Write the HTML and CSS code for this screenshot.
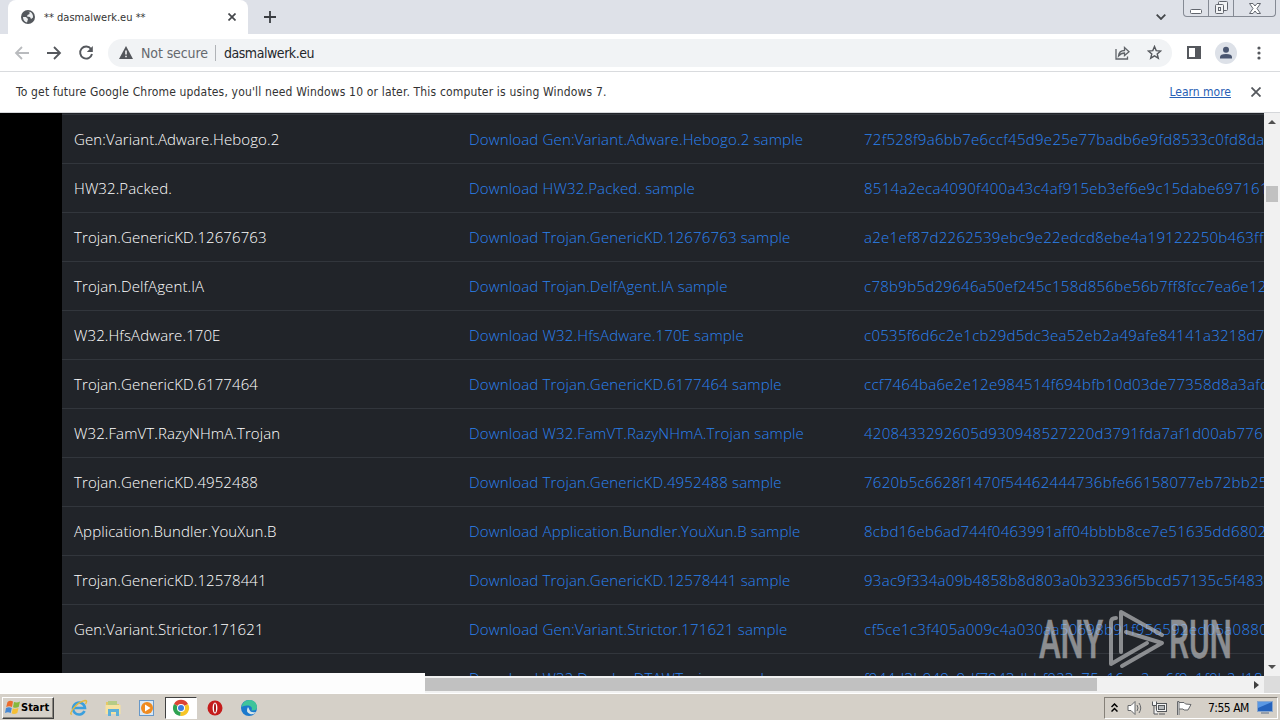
FILE: index.html
```html
<!DOCTYPE html>
<html lang="en">
<head>
    <meta charset="UTF-8">
    <meta name="viewport" content="width=device-width, initial-scale=1.0">
    <title>** dasmalwerk.eu **</title>
    <link rel="stylesheet" href="styles.css">
</head>
<body>
    <div class="tab-strip">
        <div class="tab">
            <svg class="globe" width="14" height="14" viewBox="0 0 14 14"><circle cx="7" cy="7" r="7" fill="#54585d"/><path d="M2 7 L5 7 L7 9 L6 12.4 Q2 11.500 2 7 M6 2 L8.500 1.700 L8.500 4 L6.500 5 L6 6.500 L9 7 L10 9 L12 7.500 Q12.300 4 9.500 2" fill="#eef0f2"/></svg>
            <span class="tab-title">** dasmalwerk.eu **</span>
            <svg width="8" height="8" viewBox="0 0 8 8" stroke="#44474b" stroke-width="1.700"><path d="M0.500 0.500 L7.500 7.500 M7.500 0.500 L0.500 7.500"/></svg>
        </div>
        <svg class="new-tab" width="12" height="12" viewBox="0 0 12 12" stroke="#3a3d42" stroke-width="1.800"><path d="M6 0 V12 M0 6 H12"/></svg>
        <svg class="tab-search" width="10" height="6" viewBox="0 0 10 6" fill="none" stroke="#44474b" stroke-width="1.800"><path d="M0.700 0.700 L5 5 L9.300 0.700"/></svg>
        <div class="window-buttons">
            <span><svg width="12" height="5" viewBox="0 0 12 5"><rect x="0.500" y="0.500" width="11" height="4" rx="1" fill="#fff" stroke="#62666e"/></svg></span>
            <span><svg width="13" height="13" viewBox="0 0 13 13" fill="#f2f3f5" stroke="#62666e"><rect x="3.500" y="0.500" width="9" height="9" rx="1"/><rect x="0.500" y="3.500" width="8" height="9" rx="1"/><rect x="3.500" y="6.500" width="2" height="3"/></svg></span>
            <span class="close-btn"><svg width="12" height="11" viewBox="0 0 12 11"><path d="M0.500 0.500 H4 L6 3 L8 0.500 H11.500 L8 5.500 L11.500 10.500 H8 L6 8 L4 10.500 H0.500 L4 5.500 Z" fill="#fff" stroke="#62666e"/></svg></span>
        </div>
    </div>

    <div class="toolbar">
        <svg class="nav-icon" width="16" height="14" viewBox="0 0 16 14" fill="none" stroke="#b9bbbe" stroke-width="1.800"><path d="M15 7 H2 M8 1 L2 7 L8 13"/></svg>
        <svg class="nav-icon" width="16" height="14" viewBox="0 0 16 14" fill="none" stroke="#55585d" stroke-width="1.800"><path d="M1 7 H14 M8 1 L14 7 L8 13"/></svg>
        <svg class="nav-icon" width="16" height="16" viewBox="0 0 16 16" fill="none" stroke="#55585d" stroke-width="1.900"><path d="M13 4 A6 6 0 1 0 14 9"/><path d="M14.800 1 V7 H8.800 Z" fill="#55585d" stroke="none"/></svg>
        <div class="omnibox">
            <svg width="14" height="13" viewBox="0 0 14 13"><path d="M7 0 L14 13 H0 Z" fill="#54575c"/><path d="M7 4.500 V8.500 M7 9.700 V11.200" stroke="#fff" stroke-width="1.500"/></svg>
            <span class="not-secure">Not secure</span>
            <span class="divider"></span>
            <span class="url">dasmalwerk.eu</span>
            <svg class="share" width="15" height="14" viewBox="0 0 15 14" fill="none" stroke="#606469" stroke-width="1.300"><path d="M1 3 V13 H12.500 V10.500"/><path d="M3.500 10 Q4 4.500 9.500 4.500 V1.500 L14 5.700 L9.500 9.500 V7 Q6 7 3.500 10 Z"/></svg>
            <svg class="star" width="15" height="15" viewBox="0 0 15 15" fill="none" stroke="#55585d" stroke-width="1.400"><path d="M7.500 1.500 L9.200 5.600 L13.600 6 L10.200 8.900 L11.300 13.200 L7.500 10.900 L3.700 13.200 L4.800 8.900 L1.400 6 L5.800 5.600 Z"/></svg>
        </div>
        <svg class="side-panel" width="14" height="13" viewBox="0 0 14 13"><rect x="1" y="1" width="12" height="11" fill="#fff" stroke="#55585d" stroke-width="2"/><rect x="8" y="1" width="5" height="11" fill="#55585d"/></svg>
        <svg class="avatar" width="22" height="22" viewBox="0 0 22 22"><circle cx="11" cy="11" r="11" fill="#dde1e8"/><circle cx="11" cy="7.800" r="3" fill="#4a5670"/><path d="M5 16.500 V15 Q5 12 11 12 Q17 12 17 15 V16.500 Z" fill="#4a5670"/></svg>
        <svg class="menu-dots" width="4" height="14" viewBox="0 0 4 14" fill="#55585d"><circle cx="2" cy="2" r="1.600"/><circle cx="2" cy="7" r="1.600"/><circle cx="2" cy="12" r="1.600"/></svg>
    </div>

    <div class="infobar">
        <span class="infobar-text">To get future Google Chrome updates, you'll need Windows 10 or later. This computer is using Windows 7.</span>
        <a class="learn-more" href="#">Learn more</a>
        <svg width="10" height="10" viewBox="0 0 10 10" stroke="#55585d" stroke-width="1.800"><path d="M0.500 0.500 L9.500 9.500 M9.500 0.500 L0.500 9.500"/></svg>
    </div>

    <div class="viewport">
        <div class="page">
            <div class="samples">
                <div class="row"><span>Gen:Variant.Adware.Hebogo.2</span><a>Download Gen:Variant.Adware.Hebogo.2 sample</a><a class="hash">72f528f9a6bb7e6ccf45d9e25e77badb6e9fd8533c0fd8da</a></div>
                <div class="row"><span>HW32.Packed.</span><a>Download HW32.Packed. sample</a><a class="hash">8514a2eca4090f400a43c4af915eb3ef6e9c15dabe697161</a></div>
                <div class="row"><span>Trojan.GenericKD.12676763</span><a>Download Trojan.GenericKD.12676763 sample</a><a class="hash">a2e1ef87d2262539ebc9e22edcd8ebe4a19122250b463fff</a></div>
                <div class="row"><span>Trojan.DelfAgent.IA</span><a>Download Trojan.DelfAgent.IA sample</a><a class="hash">c78b9b5d29646a50ef245c158d856be56b7ff8fcc7ea6e12</a></div>
                <div class="row"><span>W32.HfsAdware.170E</span><a>Download W32.HfsAdware.170E sample</a><a class="hash">c0535f6d6c2e1cb29d5dc3ea52eb2a49afe84141a3218d7f</a></div>
                <div class="row"><span>Trojan.GenericKD.6177464</span><a>Download Trojan.GenericKD.6177464 sample</a><a class="hash">ccf7464ba6e2e12e984514f694bfb10d03de77358d8a3afc</a></div>
                <div class="row"><span>W32.FamVT.RazyNHmA.Trojan</span><a>Download W32.FamVT.RazyNHmA.Trojan sample</a><a class="hash">4208433292605d930948527220d3791fda7af1d00ab776</a></div>
                <div class="row"><span>Trojan.GenericKD.4952488</span><a>Download Trojan.GenericKD.4952488 sample</a><a class="hash">7620b5c6628f1470f54462444736bfe66158077eb72bb25</a></div>
                <div class="row"><span>Application.Bundler.YouXun.B</span><a>Download Application.Bundler.YouXun.B sample</a><a class="hash">8cbd16eb6ad744f0463991aff04bbbb8ce7e51635dd6802</a></div>
                <div class="row"><span>Trojan.GenericKD.12578441</span><a>Download Trojan.GenericKD.12578441 sample</a><a class="hash">93ac9f334a09b4858b8d803a0b32336f5bcd57135c5f483</a></div>
                <div class="row"><span>Gen:Variant.Strictor.171621</span><a>Download Gen:Variant.Strictor.171621 sample</a><a class="hash">cf5ce1c3f405a009c4a030aa50698b91f956592ed05a0880</a></div>
                <div class="row"><span>W32.Dropler.DTAWTrojan</span><a>Download W32.Dropler.DTAWTrojan sample</a><a class="hash">f944d3b949c9df7943dbbf023c75c16ea2ca6f9c1f0b2d18</a></div>
            </div>
            <div class="v-scroll"><i class="arrow up"></i><i class="v-thumb"></i><i class="arrow down"></i></div>
        </div>
        <div class="h-scroll"><i class="h-thumb"></i><i class="arrow right"></i><i class="corner"></i></div>
        <div class="status-bubble"></div>
        <svg class="watermark" width="194" height="64" viewBox="0 0 194 64">
            <text x="1" y="50" textLength="64" lengthAdjust="spacingAndGlyphs">ANY</text>
            <text x="131" y="50" textLength="63" lengthAdjust="spacingAndGlyphs">RUN</text>
            <g fill="none" stroke-width="4" stroke-linejoin="round" stroke-linecap="round"><path d="M78 10 Q73 10 73 14 V56 L109 35"/><path d="M83 44 V4 L124 27"/><path d="M88 24 L124 35 L84 58"/></g>
        </svg>
    </div>

    <div class="taskbar">
        <div class="start">
            <svg width="16" height="15" viewBox="0 0 16 15"><path d="M2.500 2 Q5 0 8 1.500 L7 7 Q4 5.500 1.200 7 Z" fill="#ec6b2d"/><path d="M9 2 Q12 3 15 1.500 L13.700 7 Q11 8.500 8 7.200 Z" fill="#86b83c"/><path d="M1 8 Q4 6.500 6.800 8 L5.700 13 Q3 11.500 0 13 Z" fill="#4688d4"/><path d="M7.800 8.300 Q10.500 9.500 13.500 8 L12.300 13 Q9.500 14.500 6.700 13.500 Z" fill="#f5bf35"/></svg>
            <span>Start</span>
        </div>
        <div class="quick-launch">
            <span><svg width="18" height="18" viewBox="0 0 18 18" fill="none"><path d="M14.500 12 A6 6 0 1 1 15 9 H4" stroke="#3b9fdd" stroke-width="2.600"/><path d="M2 15 Q-1 16 3 10 Q8 3 15 1.500 Q18 1.500 15.500 5" stroke="#e5b93c" stroke-width="1.300"/></svg></span>
            <span><svg width="18" height="18" viewBox="0 0 18 18"><path d="M2 3 H7 L8.500 5 H15 V15 H2 Z" fill="#e5c866"/><rect x="4" y="2" width="9" height="4" fill="#b5cb85"/><path d="M1.500 6 H16.500 V15 H1.500 Z" fill="#f6e2a0"/><path d="M4 17 V10 H15 V17 H12 V13 H7 V17 Z" fill="#5eb0d8"/></svg></span>
            <span><svg width="18" height="18" viewBox="0 0 18 18"><rect x="1.500" y="1.500" width="14" height="15" fill="#d9e8f5" stroke="#6798c8"/><circle cx="9" cy="9" r="6" fill="#ef8b20"/><path d="M7 5.500 L12.500 9 L7 12.500 Z" fill="#fff"/></svg></span>
            <span class="active"><svg width="18" height="18" viewBox="0 0 18 18"><path d="M9 9 L2 5 A8 8 0 0 1 16 5 Z" fill="#dc4335"/><path d="M9 9 L2 5 A8 8 0 0 0 8.500 17 Z" fill="#2fa352"/><path d="M9 9 L16 5 A8 8 0 0 1 8.500 17 Z" fill="#f7c526"/><circle cx="9" cy="9" r="4" fill="#fff"/><circle cx="9" cy="9" r="3" fill="#3c7de0"/></svg></span>
            <span><svg width="16" height="16" viewBox="0 0 16 16"><circle cx="8" cy="8" r="7.500" fill="#c51c1c"/><ellipse cx="8" cy="8" rx="2.400" ry="5.600" fill="#fff"/><ellipse cx="8" cy="8" rx="1" ry="4.600" fill="#a31515"/></svg></span>
            <span><svg width="18" height="18" viewBox="0 0 18 18"><circle cx="9" cy="9" r="8" fill="#1b79cd"/><path d="M1.500 8 Q3 1 9.500 1 Q17 1.500 17 9 Q16 12 11.500 11.500 Q13 7.500 8.500 6.500 Q4 6 1.500 8 Z" fill="#3fc49b"/><path d="M8 8 Q5 13 10 15 Q14 16 16 13 Q10.500 14 9.500 11 Q9 9.500 8 8" fill="#d7e4e8"/></svg></span>
        </div>
        <div class="tray">
            <svg class="chevrons" width="7" height="9" viewBox="0 0 7 9" fill="none" stroke="#000" stroke-width="1.500"><path d="M0.500 4 L3.500 1 L6.500 4 M0.500 8.500 L3.500 5.500 L6.500 8.500"/></svg>
            <svg width="16" height="16" viewBox="0 0 16 16" fill="#fff" stroke="#66686b"><path d="M1 5.500 H4 L8 1.500 V14.500 L4 10.500 H1 Z"/><path d="M10 5 Q12 8 10 11 M12 3 Q15.500 8 12 13" fill="none"/></svg>
            <svg width="17" height="16" viewBox="0 0 17 16" fill="#f4f4f4" stroke="#54575a"><rect x="5.500" y="3.500" width="10" height="8"/><rect x="7.500" y="5.500" width="6" height="4" fill="#b6b9bb"/><path d="M8 14 H14 M3 6 V14 H7 M1.500 1.500 V5.500 H5.500 V1.500" /></svg>
            <svg width="16" height="16" viewBox="0 0 16 16" fill="#fff" stroke="#66686b"><path d="M1.500 15 V1.500 H3 V15 M3 2.500 H8 L9.500 4 L15 4.500 L12 10 H8 L7 9 H3"/></svg>
            <span class="clock">7:55 AM</span>
            <svg class="desktop" width="16" height="13" viewBox="0 0 16 13"><rect x="0.500" y="0.500" width="15" height="10" fill="#2563bd" stroke="#8aa7cd"/><path d="M1 1 H15 L1 7 Z" fill="#5a98e4"/><path d="M4 12 H12" stroke="#596d87"/></svg>
        </div>
    </div>
</body>
</html>
```

FILE: styles.css
```css
* {
    box-sizing: border-box;
}
body {
    margin: 0;
    width: 1280px;
    height: 720px;
    display: flex;
    flex-direction: column;
    overflow: hidden;
    background: #ffffff;
    font-family: 'DejaVu Sans Condensed', 'DejaVu Sans', sans-serif;
    font-size: 12px;
    color: #333333;
}
svg {
    display: block;
    flex: none;
}
/* Browser window */
.tab-strip {
    height: 34px;
    flex: none;
    display: flex;
    background: #dee1e8;
    padding-left: 8px;
}
.tab {
    width: 240px;
    display: flex;
    align-items: center;
    padding: 0 12px 0 13px;
    background: #ffffff;
    border-radius: 8px 8px 0 0;
}
.tab-title {
    flex: 1;
    margin-left: 9px;
    font-size: 11px;
    white-space: nowrap;
}
.new-tab {
    margin: 11px 0 0 16px;
}
.tab-search {
    margin: 14px 17px 0 auto;
}
.window-buttons {
    display: flex;
    width: 93px;
    height: 17px;
    margin-right: 4px;
    border: 1px solid #858a94;
    border-top: 0;
    border-radius: 0 0 4px 4px;
}
.window-buttons span {
    width: 25px;
    display: flex;
    justify-content: center;
    align-items: flex-end;
    padding-bottom: 2px;
    border-right: 1px solid #858a94;
}
.window-buttons .close-btn {
    width: 41px;
    border-right: 0;
}
.toolbar {
    height: 38px;
    flex: none;
    display: flex;
    align-items: center;
    padding-left: 14px;
    border-bottom: 1px solid #d9dbde;
}
.nav-icon {
    margin-right: 16px;
}
.omnibox {
    width: 1064px;
    height: 28px;
    margin-left: -2px;
    display: flex;
    align-items: center;
    padding-left: 11px;
    border-radius: 14px;
    background: #f1f3f5;
}
.not-secure,
.url {
    font-size: 14px;
    color: #65696e;
    margin-left: 8px;
    letter-spacing: -0.1px;
    white-space: nowrap;
}
.url {
    color: #24272b;
    letter-spacing: -0.45px;
}
.divider {
    width: 1px;
    height: 16px;
    margin-left: 7px;
    background: #b0b3b7;
}
.share {
    margin-left: auto;
}
.star {
    margin: 0 10px 0 17px;
}
.side-panel {
    margin-left: 15px;
}
.avatar {
    margin-left: 14px;
}
.menu-dots {
    margin-left: 20px;
}
.infobar {
    height: 41px;
    flex: none;
    display: flex;
    align-items: center;
    padding: 0 19px 0 16px;
    border-bottom: 1px solid #d5d7da;
}
.infobar-text {
    flex: 1;
    letter-spacing: 0.165px;
    white-space: nowrap;
}
.learn-more {
    color: #2860b5;
    margin-right: 20px;
}
/* Page with the sample list */
.viewport {
    position: relative;
    height: 580px;
    flex: none;
    display: flex;
    flex-direction: column;
}
.page {
    height: 563px;
    display: flex;
    background: #000000;
    overflow: hidden;
}
.samples {
    width: 1202px;
    flex: none;
    margin-left: 62px;
    overflow: hidden;
    background: #212429;
    border-top: 1px solid #212429;
    font-family: 'Open Sans', sans-serif;
    font-weight: 300;
    font-size: 15px;
    letter-spacing: 0.1px;
    color: #ffffff;
}
.row {
    height: 49px;
    display: grid;
    grid-template-columns: 395px 395px 412px;
    align-items: center;
    border-top: 1px solid #32363c;
    white-space: nowrap;
}
.row > * {
    padding-left: 12px;
    overflow: hidden;
}
.row a {
    color: #2b82f0;
    letter-spacing: 0.16px;
}
.row .hash {
    letter-spacing: 0.29px;
}
.v-scroll {
    width: 16px;
    display: flex;
    flex-direction: column;
    align-items: center;
    padding: 7px 0 7px;
    background: #f1f1f1;
}
.v-thumb {
    width: 12px;
    height: 16px;
    margin-top: 62px;
    background: #c1c1c1;
}
.arrow {
    width: 0;
    height: 0;
    border: 4px solid transparent;
}
.up {
    border-top: 0;
    border-bottom-color: #505050;
}
.down {
    margin-top: auto;
    border-bottom: 0;
    border-top-color: #505050;
}
.right {
    border-width: 4px 0 4px 5px;
    border-left-color: #404040;
}
.h-scroll {
    height: 17px;
    display: flex;
    align-items: center;
    background: #f1f1f1;
}
.h-thumb {
    width: 1097px;
    height: 13px;
    margin-right: 157px;
    background: #c1c1c1;
}
.corner {
    width: 16px;
    height: 17px;
    margin-left: auto;
    background: #dcdcdc;
}
.status-bubble {
    position: absolute;
    left: 0;
    bottom: 0;
    width: 425px;
    height: 20px;
    background: #fdfdfd;
}
.watermark {
    position: absolute;
    left: 1038px;
    top: 495px;
    opacity: 0.65;
    fill: #c4c6c8;
    stroke: #c4c6c8;
    font-family: Roboto, sans-serif;
    font-weight: 500;
    font-size: 53px;
}
.watermark text {
    stroke-width: 0.5px;
}
/* Windows taskbar */
.taskbar {
    height: 27px;
    flex: none;
    display: flex;
    align-items: center;
    padding: 1px 2px 0;
    background: #d5d0c8;
    border-top: 1px solid #ffffff;
    color: #000000;
}
.start {
    width: 52px;
    height: 22px;
    display: flex;
    align-items: center;
    padding-left: 2px;
    border: 1px solid;
    border-color: #ffffff #404040 #404040 #ffffff;
    box-shadow: inset -1px -1px #8b8780;
    font-weight: bold;
    font-size: 11px;
}
.quick-launch {
    display: flex;
    margin-left: 9px;
    gap: 2px;
}
.quick-launch span {
    width: 32px;
    height: 22px;
    display: flex;
    align-items: center;
    justify-content: center;
}
.quick-launch .active {
    background: #ffffff;
    border: 1px solid;
    border-color: #404040 #ffffff #ffffff #404040;
}
.tray {
    width: 174px;
    height: 22px;
    margin-left: auto;
    display: flex;
    align-items: center;
    gap: 8px;
    padding-left: 6px;
    border: 1px solid;
    border-color: #858078 #ffffff #ffffff #858078;
}
.chevrons {
    margin-right: 1px;
}
.clock {
    margin-left: 8px;
    font-size: 12px;
    letter-spacing: -0.5px;
    white-space: nowrap;
}
```
